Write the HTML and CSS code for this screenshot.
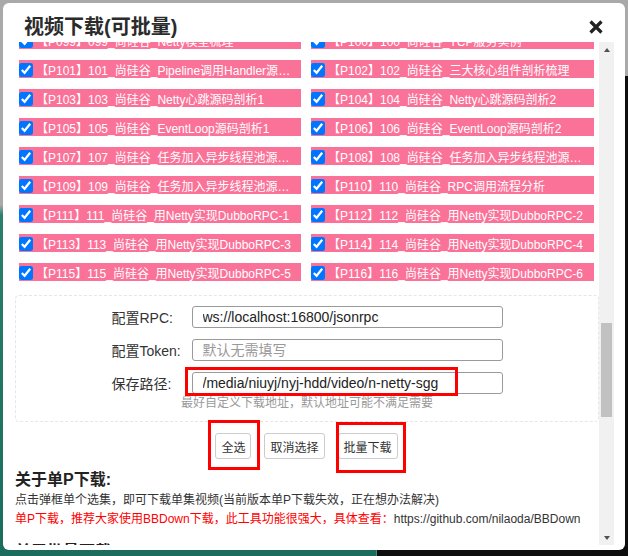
FILE: index.html
```html
<!DOCTYPE html>
<html lang="zh-CN">
<head>
<meta charset="utf-8">
<title>视频下载(可批量)</title>
<link rel="stylesheet" href="styles.css">
</head>
<body>
<div class="modal">
  <div class="modal-header">
    <h2 class="modal-title">视频下载(可批量)</h2>
    <button class="close" type="button" aria-label="关闭">
      <svg width="14" height="14" viewBox="0 0 14 14"><path d="M1.5 1.5 L12.5 12.5 M12.5 1.5 L1.5 12.5" stroke="#222" stroke-width="3.2" fill="none"/></svg>
    </button>
  </div>
  <div class="modal-main">
    <div class="modal-body" id="scroller">
      <div class="ep-list" id="list">
        <label class="ep" id="p101"><input type="checkbox" checked><span class="ep-name">【P101】101_尚硅谷_Pipeline调用Handler源码剖析</span></label>
        <label class="ep"><input type="checkbox" checked><span class="ep-name">【P102】102_尚硅谷_三大核心组件剖析梳理</span></label>
        <label class="ep"><input type="checkbox" checked><span class="ep-name">【P103】103_尚硅谷_Netty心跳源码剖析1</span></label>
        <label class="ep"><input type="checkbox" checked><span class="ep-name">【P104】104_尚硅谷_Netty心跳源码剖析2</span></label>
        <label class="ep"><input type="checkbox" checked><span class="ep-name">【P105】105_尚硅谷_EventLoop源码剖析1</span></label>
        <label class="ep"><input type="checkbox" checked><span class="ep-name">【P106】106_尚硅谷_EventLoop源码剖析2</span></label>
        <label class="ep"><input type="checkbox" checked><span class="ep-name">【P107】107_尚硅谷_任务加入异步线程池源码剖析1</span></label>
        <label class="ep"><input type="checkbox" checked><span class="ep-name">【P108】108_尚硅谷_任务加入异步线程池源码剖析2</span></label>
        <label class="ep"><input type="checkbox" checked><span class="ep-name">【P109】109_尚硅谷_任务加入异步线程池源码剖析3</span></label>
        <label class="ep"><input type="checkbox" checked><span class="ep-name">【P110】110_尚硅谷_RPC调用流程分析</span></label>
        <label class="ep"><input type="checkbox" checked><span class="ep-name">【P111】111_尚硅谷_用Netty实现DubboRPC-1</span></label>
        <label class="ep"><input type="checkbox" checked><span class="ep-name">【P112】112_尚硅谷_用Netty实现DubboRPC-2</span></label>
        <label class="ep"><input type="checkbox" checked><span class="ep-name">【P113】113_尚硅谷_用Netty实现DubboRPC-3</span></label>
        <label class="ep"><input type="checkbox" checked><span class="ep-name">【P114】114_尚硅谷_用Netty实现DubboRPC-4</span></label>
        <label class="ep"><input type="checkbox" checked><span class="ep-name">【P115】115_尚硅谷_用Netty实现DubboRPC-5</span></label>
        <label class="ep"><input type="checkbox" checked><span class="ep-name">【P116】116_尚硅谷_用Netty实现DubboRPC-6</span></label>
      </div>

      <div class="config">
        <div class="field">
          <label class="field-label" for="rpc">配置RPC:</label>
          <input class="field-input" id="rpc" type="text" value="ws://localhost:16800/jsonrpc">
        </div>
        <div class="field">
          <label class="field-label" for="token">配置Token:</label>
          <input class="field-input" id="token" type="text" placeholder="默认无需填写">
        </div>
        <div class="field">
          <label class="field-label" for="path">保存路径:</label>
          <input class="field-input" id="path" type="text" value="/media/niuyj/nyj-hdd/video/n-netty-sgg">
        </div>
        <p class="hint">最好自定义下载地址，默认地址可能不满足需要</p>
      </div>

      <div class="actions">
        <button class="btn" type="button">全选</button>
        <button class="btn" type="button">取消选择</button>
        <button class="btn" type="button">批量下载</button>
      </div>

      <div class="notes">
        <h3 class="notes-title">关于单P下载:</h3>
        <p class="notes-text">点击弹框单个选集，即可下载单集视频(当前版本单P下载失效，正在想办法解决)</p>
        <p class="notes-text"><span class="warn">单P下载，推荐大家使用BBDown下载，此工具功能很强大，具体查看：</span>https://github.com/nilaoda/BBDown</p>
        <h3 class="notes-title notes-title-next">关于批量下载:</h3>
        <p class="notes-text">批量下载依赖 aria2 的 RPC 服务，请先启动 aria2 并开启 RPC 功能。</p>
        <p class="notes-text">勾选需要下载的选集，点击“批量下载”，任务会自动推送到 aria2。</p>
        <p class="notes-text">如果配置了 RPC 密钥，请在“配置Token”中填写。</p>
        <p class="notes-text">保存路径为 aria2 所在机器上的绝对路径。</p>
      </div>
    </div>

    <div class="scrollbar" aria-hidden="true">
      <span class="sb-btn sb-up"></span>
      <span class="sb-before"></span>
      <span class="sb-thumb"></span>
      <span class="sb-btn sb-down"></span>
    </div>
  </div>

  <div class="mark mark-path"></div>
  <div class="mark mark-all"></div>
  <div class="mark mark-batch"></div>
</div>
<script src="script.js"></script>
</body>
</html>
```

FILE: styles.css
```css
* {
  box-sizing: border-box;
}

html,
body {
  margin: 0;
  height: 100%;
}

body {
  overflow: hidden;
  font-family: "Liberation Sans", "Noto Sans CJK SC", sans-serif;
  color: #333;
  background:
    linear-gradient(#a9a9a9, #a9a9a9) 0 0 / 100% 76px no-repeat,
    linear-gradient(#0e0e0e, #0e0e0e) 100% 0 / 40% 100% no-repeat,
    linear-gradient(#a9a9a9 0, #a9a9a9 205px, #2a7f6e 215px, #1b6c5d 100%) 0 0 / 60% 100% no-repeat;
}

.modal {
  position: relative;
  margin: 3px;
  width: 622px;
  height: 547px;
  background: #fff;
  border-radius: 6px;
  display: flex;
  flex-direction: column;
}

.modal-header {
  flex: none;
  height: 39px;
  padding: 8px 22px 0 21px;
  display: flex;
  align-items: center;
  justify-content: space-between;
}

.modal-title {
  margin: 0;
  font-size: 20px;
  font-weight: bold;
  color: #2b2b2b;
  line-height: 24px;
}

.close {
  border: 0;
  padding: 0;
  background: none;
  width: 14px;
  height: 14px;
  display: flex;
}

.modal-main {
  flex: 1;
  min-height: 0;
  margin: 0 0 5px 11px;
  width: 600px;
  display: flex;
}

.modal-body {
  position: relative;
  width: 585px;
  height: 100%;
  overflow: hidden;
}

.scrollbar {
  width: 15px;
  height: 100%;
  background: #f1f1f1;
  display: flex;
  flex-direction: column;
  align-items: center;
}

.sb-btn {
  width: 15px;
  height: 15px;
  display: flex;
  align-items: center;
  justify-content: center;
}

.sb-btn::before {
  content: "";
  width: 0;
  height: 0;
  border-left: 3.5px solid transparent;
  border-right: 3.5px solid transparent;
}

.sb-up::before {
  border-bottom: 4px solid #505050;
}

.sb-down {
  margin-top: auto;
}

.sb-down::before {
  border-top: 4px solid #505050;
}

.sb-before {
  height: 266px;
}

.sb-thumb {
  width: 11px;
  height: 94px;
  background: #c1c1c1;
}

.ep-list {
  display: grid;
  grid-template-columns: 282px 283px;
  column-gap: 10px;
  row-gap: 11px;
  padding-left: 5px;
}

.ep {
  height: 18px;
  background: #fb7299;
  color: #fff;
  font-size: 12px;
  display: flex;
  align-items: center;
  overflow: hidden;
  white-space: nowrap;
}

.ep input {
  flex: none;
  width: 14px;
  height: 14px;
  align-self: flex-end;
  margin: 0 3px 1px 0;
}

.ep-name {
  flex: 1;
  min-width: 0;
  overflow: hidden;
  text-overflow: ellipsis;
  padding-right: 7px;
}

.config {
  margin: 14px 0 0 1px;
  width: 584px;
  border: 1px dashed #e6e6e6;
  border-radius: 4px;
  padding: 10px 0 11px;
}

.field {
  display: flex;
  justify-content: center;
  align-items: center;
  margin-bottom: 11px;
}

.field:last-of-type {
  margin-bottom: 2px;
}

.field-label {
  width: 80px;
  font-size: 14px;
  color: #333;
}

.field-input {
  width: 311px;
  height: 22px;
  border: 1px solid #9a9a9a;
  border-radius: 3px;
  padding: 0 10px;
  font-family: "Liberation Sans", "Noto Sans CJK SC", sans-serif;
  font-size: 14px;
  color: #222;
  outline: none;
}

.field-input::placeholder {
  color: #999;
}

.hint {
  margin: 0;
  text-align: center;
  font-size: 12px;
  line-height: 14px;
  color: #999;
}

.actions {
  margin-top: 11px;
  display: flex;
  justify-content: center;
  gap: 13px;
}

.btn {
  height: 26px;
  padding: 0 5px;
  font-family: "Liberation Sans", "Noto Sans CJK SC", sans-serif;
  font-size: 12px;
  color: #333;
  background: #fff;
  border: 1px solid #ccc;
  border-radius: 3px;
}

.notes {
  padding: 0 0 507px 1px;
}

.notes-title {
  margin: 10px 0 0;
  font-size: 16px;
  line-height: 22px;
  font-weight: bold;
  color: #222;
}

.notes-title-next {
  margin-top: 13px;
}

.notes-text {
  margin: 0;
  font-size: 12px;
  line-height: 18.5px;
  color: #333;
}

.warn {
  color: #f00;
}

.mark {
  position: absolute;
  border: 3px solid #f00;
  pointer-events: none;
}

.mark-path {
  left: 182px;
  top: 364px;
  width: 273px;
  height: 29px;
}

.mark-all {
  left: 205px;
  top: 417px;
  width: 52px;
  height: 50px;
}

.mark-batch {
  left: 333px;
  top: 419px;
  width: 70px;
  height: 51px;
}
```

FILE: script.js
```js
(function () {
  var list = document.getElementById('list');
  var topics = [
    'Netty课程介绍', 'IO模型介绍', 'BIO基本介绍', 'BIO应用实例', 'NIO基本介绍',
    'NIO和BIO比较', 'NIO三大核心原理', 'Buffer基本使用', 'Buffer源码剖析', 'Channel基本介绍',
    'FileChannel应用实例', 'MappedByteBuffer', 'Selector基本介绍', 'NIO非阻塞网络编程',
    'SelectionKey剖析', '群聊系统服务端', '群聊系统客户端', '零拷贝原理剖析', 'AIO基本介绍',
    'Netty概述', '线程模型介绍', 'Reactor模式剖析', 'Netty模型梳理', 'TCP服务实例',
    'TaskQueue自定义任务', '异步模型原理剖析', 'HTTP服务实例', 'Bootstrap介绍',
    'Pipeline介绍', 'Unpooled应用实例', '心跳检测机制', 'WebSocket长连接', 'Protobuf介绍',
    '编解码器介绍', 'Handler调用机制', 'TCP粘包拆包', 'Netty启动过程剖析', 'ChannelHandler调用链路分析'
  ];
  var frag = document.createDocumentFragment();
  for (var i = 1; i <= 100; i++) {
    var num = ('00' + i).slice(-3);
    var label = document.createElement('label');
    label.className = 'ep';
    var box = document.createElement('input');
    box.type = 'checkbox';
    box.checked = true;
    var name = document.createElement('span');
    name.className = 'ep-name';
    name.textContent = '【P' + num + '】' + num + '_尚硅谷_' + topics[(i - 1) % topics.length];
    label.appendChild(box);
    label.appendChild(name);
    frag.appendChild(label);
  }
  list.insertBefore(frag, list.firstChild);
  var scroller = document.getElementById('scroller');
  var target = document.getElementById('p101');
  scroller.scrollTop = target.offsetTop - 18;
})();
```
